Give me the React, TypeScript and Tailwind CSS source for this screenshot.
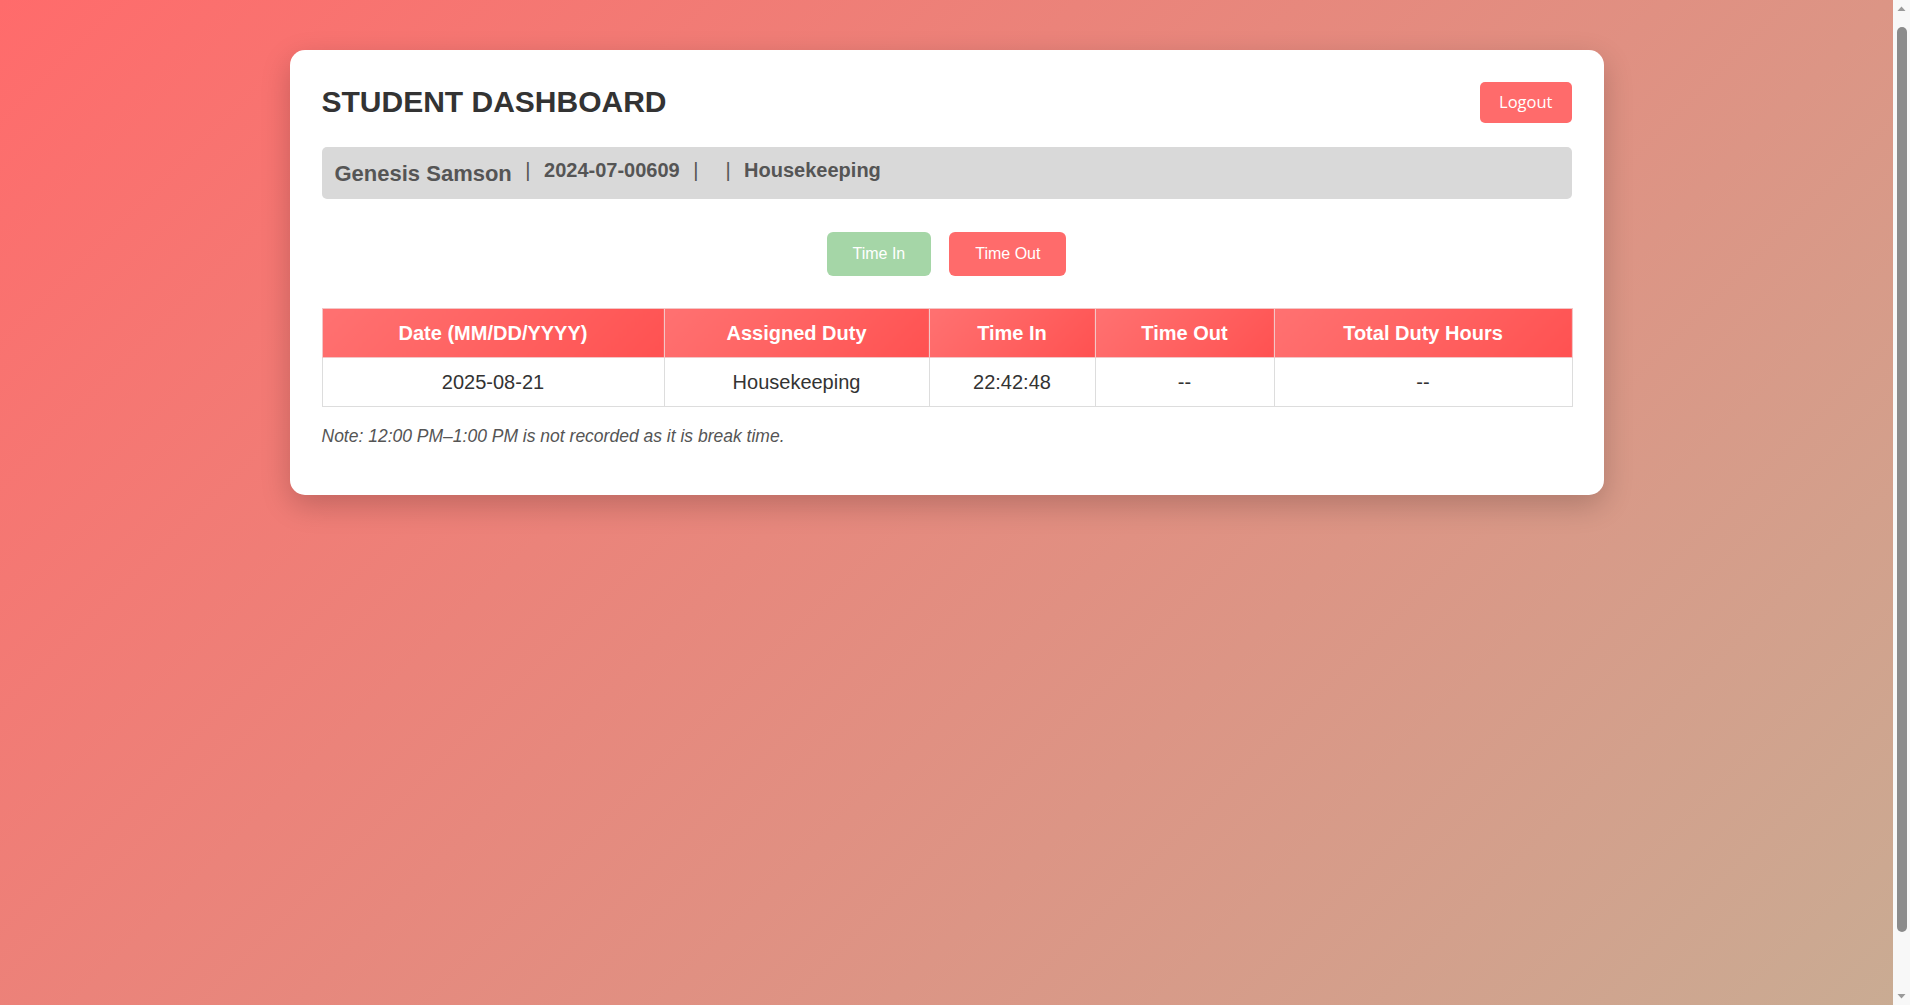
import React from 'react'

type Row = {
  date: string
  duty: string
  timeIn: string
  timeOut: string
  total: string
}

const columns = [
  { label: 'Date (MM/DD/YYYY)', width: 'w-[342px]' },
  { label: 'Assigned Duty', width: 'w-[265px]' },
  { label: 'Time In', width: 'w-[166px]' },
  { label: 'Time Out', width: 'w-[179px]' },
  { label: 'Total Duty Hours', width: 'w-[298px]' },
]

const rows: Row[] = [
  { date: '2025-08-21', duty: 'Housekeeping', timeIn: '22:42:48', timeOut: '--', total: '--' },
]

const Sep = () => <span className="mx-[13.5px] font-normal">|</span>

// window scrollbar seen in the screenshot
const Scrollbar = () => (
  <div className="flex h-full w-[17px] flex-col items-center bg-[#f8f8f8]">
    <svg width="17" height="17" viewBox="0 0 17 17" className="shrink-0">
      <path d="M4.5 11 L8.5 6.5 L12.5 11 Z" fill="#9a9a9a" />
    </svg>
    <div className="mx-auto mt-[10px] h-[905px] w-[10px] rounded-[5px] bg-[#8b8b8b]" />
    <div className="flex-1" />
    <svg width="17" height="17" viewBox="0 0 17 17" className="shrink-0">
      <path d="M4.5 6 L8.5 10.5 L12.5 6 Z" fill="#9a9a9a" />
    </svg>
  </div>
)

const App = () => {
  return (
    <div className="flex h-screen overflow-hidden font-['Liberation_Sans',Arial,sans-serif]">
      <div className="w-[1893px] shrink-0 overflow-hidden">
        <div className="min-h-[1078px] bg-[linear-gradient(135deg,#ff6b6b,#c8ad94)] pt-[50px]">
          <div className="mx-auto w-[1314px] rounded-[15px] bg-white p-8 shadow-[0_10px_30px_rgba(0,0,0,0.2)]">
            {/* header */}
            <div className="flex items-center justify-between">
              <h1 className="text-[30px] font-bold leading-[1.15] text-[#333]">STUDENT DASHBOARD</h1>
              <button className="h-[41px] rounded-[5px] bg-[#ff6b6b] px-[19px] font-['Open_Sans',sans-serif] text-[16.5px] text-white">
                Logout
              </button>
            </div>

            {/* student info */}
            <div className="mt-[24px] flex h-[52px] items-center rounded-[5px] bg-[#d9d9d9] px-[13px] font-bold text-[#555]">
              <span className="text-[22px]">Genesis Samson</span>
              <div className="flex items-center pb-[6px] text-[20px]">
                <Sep />
                <span>2024-07-00609</span>
                <Sep />
                <span></span>
                <Sep />
                <span>Housekeeping</span>
              </div>
            </div>

            {/* time buttons */}
            <div className="mt-[33px] flex justify-center gap-[18px]">
              <button className="h-[44px] rounded-[6px] bg-[#a5d6a7] px-[26px] text-[16px] text-white">Time In</button>
              <button className="h-[44px] rounded-[6px] bg-[#ff6b6b] px-[26px] text-[16px] text-white">Time Out</button>
            </div>

            {/* log table */}
            <table className="mt-[32px] w-full table-fixed border-collapse text-[20px]">
              <thead>
                <tr className="h-[49px]">
                  {columns.map((c) => (
                    <th
                      key={c.label}
                      className={`${c.width} border border-[#f3c6c6] bg-linear-135 from-[#ff7171] to-[#ff5151] p-0 text-center font-bold text-white`}
                    >
                      {c.label}
                    </th>
                  ))}
                </tr>
              </thead>
              <tbody>
                {rows.map((r) => (
                  <tr key={r.date} className="h-[49px] text-[#333]">
                    <td className="border border-[#ddd] p-0 text-center">{r.date}</td>
                    <td className="border border-[#ddd] p-0 text-center">{r.duty}</td>
                    <td className="border border-[#ddd] p-0 text-center">{r.timeIn}</td>
                    <td className="border border-[#ddd] p-0 text-center">{r.timeOut}</td>
                    <td className="border border-[#ddd] p-0 text-center">{r.total}</td>
                  </tr>
                ))}
              </tbody>
            </table>

            <p className="mt-[18.5px] mb-[17.5px] text-[17.5px] leading-[20px] italic text-[#555]">
              Note: 12:00 PM–1:00 PM is not recorded as it is break time.
            </p>
          </div>
        </div>
      </div>
      <Scrollbar />
    </div>
  )
}

export default App
